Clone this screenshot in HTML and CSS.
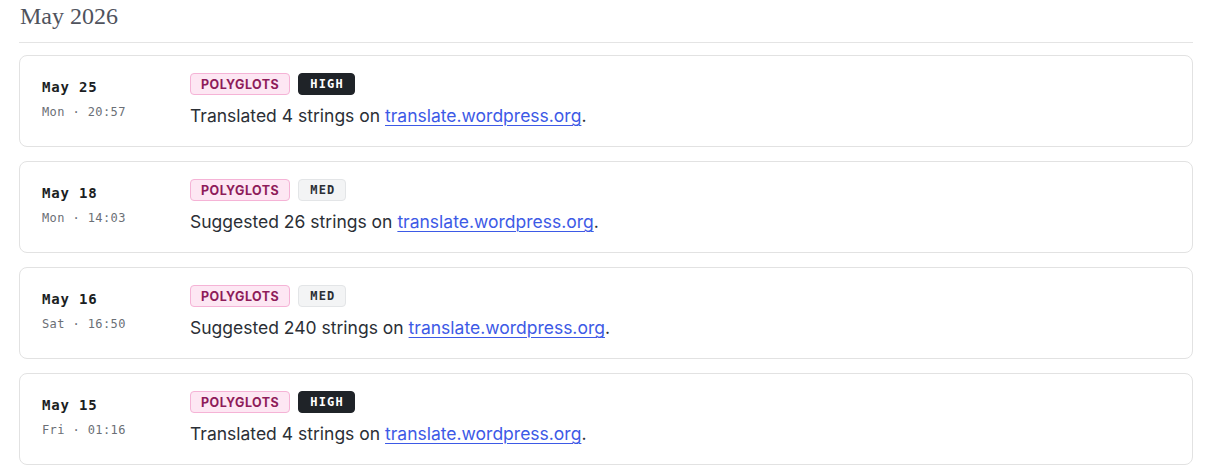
FILE: index.html
```html
<!DOCTYPE html>
<html lang="en">
<head>
<meta charset="utf-8">
<title>Activity — May 2026</title>
<link rel="stylesheet" href="styles.css">
</head>
<body>
<section class="month">
  <h2 class="month-title">May 2026</h2>
  <ul class="feed">
    <li class="entry">
      <div class="when">
        <div class="day">May 25</div>
        <div class="time">Mon · 20:57</div>
      </div>
      <div class="what">
        <div class="tags">
          <span class="tag tag-team">Polyglots</span>
          <span class="tag tag-high">HIGH</span>
        </div>
        <p class="desc">Translated 4 strings on <a href="#">translate.wordpress.org</a>.</p>
      </div>
    </li>
    <li class="entry">
      <div class="when">
        <div class="day">May 18</div>
        <div class="time">Mon · 14:03</div>
      </div>
      <div class="what">
        <div class="tags">
          <span class="tag tag-team">Polyglots</span>
          <span class="tag tag-med">MED</span>
        </div>
        <p class="desc">Suggested 26 strings on <a href="#">translate.wordpress.org</a>.</p>
      </div>
    </li>
    <li class="entry">
      <div class="when">
        <div class="day">May 16</div>
        <div class="time">Sat · 16:50</div>
      </div>
      <div class="what">
        <div class="tags">
          <span class="tag tag-team">Polyglots</span>
          <span class="tag tag-med">MED</span>
        </div>
        <p class="desc">Suggested 240 strings on <a href="#">translate.wordpress.org</a>.</p>
      </div>
    </li>
    <li class="entry">
      <div class="when">
        <div class="day">May 15</div>
        <div class="time">Fri · 01:16</div>
      </div>
      <div class="what">
        <div class="tags">
          <span class="tag tag-team">Polyglots</span>
          <span class="tag tag-high">HIGH</span>
        </div>
        <p class="desc">Translated 4 strings on <a href="#">translate.wordpress.org</a>.</p>
      </div>
    </li>
  </ul>
</section>
</body>
</html>
```

FILE: styles.css
```css
* { box-sizing: border-box; }

html, body {
  margin: 0;
  background: #fff;
}

body {
  padding: 0 18px 0 19px;
  font-family: Inter, "Noto Sans", sans-serif;
  color: #2b2f36;
}

.month-title {
  margin: 0;
  padding: 2px 0 12px 1px;
  font-family: "Liberation Serif", "DejaVu Serif", serif;
  font-weight: 400;
  font-size: 24px;
  line-height: 28px;
  color: #4f535d;
  border-bottom: 1px solid #e4e4e4;
}

.feed {
  list-style: none;
  margin: 12px 0 0;
  padding: 0;
  display: flex;
  flex-direction: column;
  gap: 14px;
}

.entry {
  display: flex;
  border: 1px solid #e2e2e2;
  border-radius: 8px;
  padding: 17px 22px 16px 22px;
  min-height: 92px;
}

.when {
  width: 148px;
  flex: none;
  padding-top: 5px;
  font-family: "DejaVu Sans Mono", "Liberation Mono", monospace;
}

.day {
  font-weight: 700;
  font-size: 14px;
  line-height: 18px;
  color: #1b1e23;
  letter-spacing: 0.8px;
}

.time {
  margin-top: 8px;
  font-size: 12px;
  line-height: 16px;
  color: #6b6f76;
  letter-spacing: 0.4px;
}

.what {
  display: flex;
  flex-direction: column;
  gap: 9px;
}

.tags {
  display: flex;
  gap: 8px;
}

.tag {
  display: inline-flex;
  align-items: center;
  height: 22px;
  padding: 0 10px;
  border-radius: 4px;
  border: 1px solid transparent;
  font-size: 12.5px;
  font-weight: 700;
}

.tag-team {
  text-transform: uppercase;
  background: #fde7f3;
  border-color: #f5b3d6;
  color: #8e1c5a;
  letter-spacing: 0.45px;
}

.tag-high,
.tag-med {
  font-family: "DejaVu Sans Mono", "Liberation Mono", monospace;
  font-size: 12px;
  letter-spacing: 1.2px;
  padding: 0 9.8px 0 11px;
}

.tag-high {
  background: #1f2328;
  border-color: #1f2328;
  color: #fff;
}

.tag-med {
  background: #f3f4f5;
  border-color: #e3e5e7;
  color: #2b2f36;
}

.desc {
  margin: 0;
  font-size: 17.5px;
  line-height: 24px;
  color: #2b2f36;
}

.desc a {
  color: #3d5ae6;
  text-decoration: underline;
  text-underline-offset: 3px;
  text-decoration-thickness: 1px;
}
```
